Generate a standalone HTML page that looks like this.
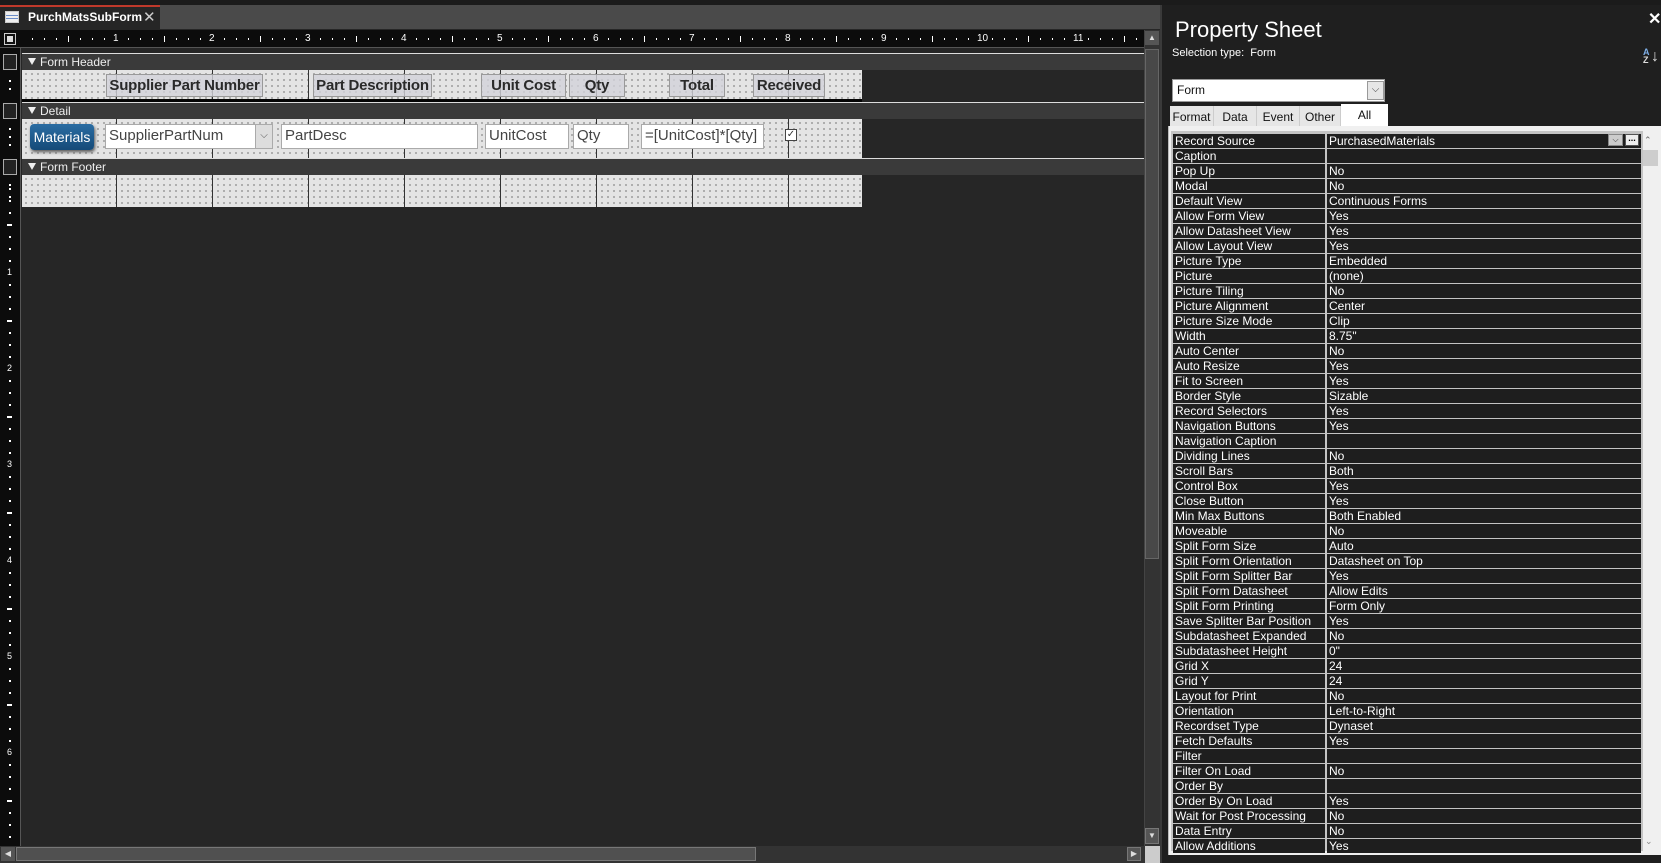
<!DOCTYPE html>
<html><head><meta charset="utf-8">
<style>
*{box-sizing:border-box;margin:0;padding:0}
body{width:1661px;height:863px;background:#262626;position:relative;overflow:hidden;font-family:"Liberation Sans",sans-serif}
.a{position:absolute}
.dots{background-color:#e4e4e4;background-image:radial-gradient(circle,#666 0.6px,transparent 0.9px);background-size:6px 6px;background-position:1px 1px}
.bar{background:#3a3a3a;color:#eee;font-size:12px;line-height:16px;padding-left:18px;border-top:1px solid #ddd}
.bar:before{content:"";position:absolute;left:6px;top:4px;border-left:4px solid transparent;border-right:4px solid transparent;border-top:7px solid #eee}
.vl{position:absolute;top:0;bottom:0;width:1px;background:#333}
.lbl{position:absolute;top:4px;height:23px;border:1px solid #999;background:rgba(210,210,218,.8);color:#2a2a2a;font-weight:bold;font-size:15px;line-height:21px;text-align:center;white-space:nowrap;letter-spacing:-0.2px}
.tb{position:absolute;top:5px;height:25px;background:#fff;border:1px solid #aaa;color:#444;font-size:15px;line-height:22px;padding-left:3px;white-space:nowrap;overflow:hidden}
.row{position:absolute;left:1173px;width:468px;height:14px;font-size:12px;color:#fff;line-height:14px}
.row .n{position:absolute;left:0;width:152px;height:14px;background:#1e1e1e;padding-left:2px}
.row .v{position:absolute;left:154px;width:314px;height:14px;background:#1e1e1e;padding-left:2px}
.tab{position:absolute;top:106px;height:20px;font-size:12px;color:#111;background:#e6e6e6;border-right:1px solid #ccc;line-height:22px;text-align:center}
</style></head><body>
<div class="a" style="left:0;top:0;width:1661px;height:5px;background:#1b1b1b"></div>
<div class="a" style="left:0;top:5px;width:1160px;height:24px;background:#4a4a4a"></div>
<div class="a" style="left:0;top:5px;width:160px;height:25px;background:#262626;border-top:2px solid #c0392b"></div>
<div class="a" style="left:5px;top:11px;width:14px;height:12px;border:1px solid #ccc;background:#eee"><div class="a" style="left:0;top:3px;width:12px;height:1px;background:#6a8cc8"></div><div class="a" style="left:0;top:6px;width:12px;height:1px;background:#6a8cc8"></div></div>
<div class="a" style="left:28px;top:10px;color:#fff;font-size:12px;font-weight:bold">PurchMatsSubForm</div>
<div class="a" style="left:143px;top:8px;color:#ccc;font-size:15px">✕</div>
<div class="a" style="left:0;top:30px;width:1144px;height:18px;background:#0c0c0c;border-bottom:1px solid #555"></div>
<div class="a" style="left:4px;top:33px;width:12px;height:12px;border:1px solid #ccc;background:#111"><div class="a" style="left:2px;top:2px;width:6px;height:6px;background:#ddd"></div></div>
<div id="ruler" class="a" style="left:0;top:30px;width:1144px;height:18px;color:#fff;font-size:10px"></div>
<div class="a" style="left:0;top:48px;width:21px;height:798px;background:#0c0c0c;border-right:1px solid #555"></div>
<div id="vr" class="a" style="left:0;top:0;width:21px;height:846px;color:#fff;font-size:9px"></div>
<div class="a" style="left:3px;top:54px;width:14px;height:16px;border:1px solid #aaa;background:#222"></div>
<div class="a" style="left:3px;top:103px;width:14px;height:16px;border:1px solid #aaa;background:#222"></div>
<div class="a" style="left:3px;top:159px;width:14px;height:16px;border:1px solid #aaa;background:#222"></div>
<div class="a bar" style="left:22px;top:53px;width:1122px;height:17px">Form Header</div>
<div class="a bar" style="left:22px;top:102px;width:1122px;height:17px">Detail</div>
<div class="a bar" style="left:22px;top:158px;width:1122px;height:17px">Form Footer</div>
<div class="a dots" style="left:22px;top:70px;width:840px;height:30px">
 <div class="vl" style="left:94px"></div><div class="vl" style="left:190px"></div><div class="vl" style="left:286px"></div><div class="vl" style="left:382px"></div><div class="vl" style="left:478px"></div><div class="vl" style="left:574px"></div><div class="vl" style="left:670px"></div><div class="vl" style="left:766px"></div>
 <div class="lbl" style="left:84px;width:157px">Supplier Part Number</div>
 <div class="lbl" style="left:291px;width:119px">Part Description</div>
 <div class="lbl" style="left:459px;width:85px">Unit Cost</div>
 <div class="lbl" style="left:547px;width:56px">Qty</div>
 <div class="lbl" style="left:647px;width:56px">Total</div>
 <div class="lbl" style="left:731px;width:72px">Received</div>
</div>
<div class="a" style="left:22px;top:99px;width:840px;height:3px;background:#050505"></div>
<div class="a dots" style="left:22px;top:119px;width:840px;height:39px">
 <div class="vl" style="left:94px"></div><div class="vl" style="left:190px"></div><div class="vl" style="left:286px"></div><div class="vl" style="left:382px"></div><div class="vl" style="left:478px"></div><div class="vl" style="left:574px"></div><div class="vl" style="left:670px"></div><div class="vl" style="left:766px"></div>
 <div class="a" style="left:8px;top:5px;width:64px;height:26px;background:linear-gradient(#2a6da3,#154a78);border-radius:4px;color:#fff;font-size:14px;line-height:26px;text-align:center;box-shadow:1px 2px 3px #555">Materials</div>
 <div class="tb" style="left:83px;width:168px">SupplierPartNum<div class="a" style="right:0;top:0;width:17px;height:23px;background:#ddd;border-left:1px solid #aaa;font-size:10px;text-align:center;color:#555">⌵</div></div>
 <div class="tb" style="left:259px;width:197px">PartDesc</div>
 <div class="tb" style="left:463px;width:84px">UnitCost</div>
 <div class="tb" style="left:551px;width:56px">Qty</div>
 <div class="tb" style="left:619px;width:123px">=[UnitCost]*[Qty]</div>
 <div class="a" style="left:763px;top:10px;width:12px;height:12px;border:1px solid #444;background:#fff;font-size:10px;line-height:10px;text-align:center;color:#333">✓</div>
</div>
<div class="a dots" style="left:22px;top:175px;width:840px;height:32px">
 <div class="vl" style="left:94px"></div><div class="vl" style="left:190px"></div><div class="vl" style="left:286px"></div><div class="vl" style="left:382px"></div><div class="vl" style="left:478px"></div><div class="vl" style="left:574px"></div><div class="vl" style="left:670px"></div><div class="vl" style="left:766px"></div>
</div>
<div class="a" style="left:1144px;top:30px;width:16px;height:816px;background:#333;border-left:1px solid #444"></div>
<div class="a" style="left:1145px;top:31px;width:14px;height:14px;background:#555;color:#ddd;font-size:8px;text-align:center;line-height:14px">▲</div>
<div class="a" style="left:1145px;top:49px;width:14px;height:510px;background:#484848;border:1px solid #666"></div>
<div class="a" style="left:1145px;top:828px;width:14px;height:16px;background:#555;border:1px solid #777;color:#ddd;font-size:8px;text-align:center;line-height:14px">▼</div>
<div class="a" style="left:0;top:846px;width:1160px;height:17px;background:#333"></div>
<div class="a" style="left:1px;top:847px;width:14px;height:14px;background:#555;color:#ddd;font-size:8px;line-height:14px;text-align:center">◀</div>
<div class="a" style="left:16px;top:847px;width:740px;height:14px;background:#505050;border:1px solid #777"></div>
<div class="a" style="left:1127px;top:847px;width:14px;height:14px;background:#555;border:1px solid #777;color:#ddd;font-size:8px;line-height:12px;text-align:center">▶</div>
<div class="a" style="left:1145px;top:846px;width:15px;height:17px;background:#ccc"></div>
<div class="a" style="left:1160px;top:5px;width:501px;height:858px;background:#1f1f1f;border-left:2px solid #3a3a3a"></div>
<div class="a" style="left:1175px;top:17px;color:#fff;font-size:22px">Property Sheet</div>
<div class="a" style="left:1172px;top:47px;color:#fff;font-size:11px">Selection type:&nbsp; Form</div>
<div class="a" style="left:1648px;top:9px;color:#fff;font-size:16px;font-weight:bold">✕</div>
<div class="a" style="left:1643px;top:48px;color:#7fb0e8;font-size:9px;line-height:8px;font-weight:bold">A<br><span style="color:#ddd">Z</span></div>
<div class="a" style="left:1651px;top:48px;color:#ddd;font-size:16px">↓</div>
<div class="a" style="left:1172px;top:79px;width:213px;height:23px;background:#fff;border:1px solid #999;font-size:12px;line-height:20px;padding-left:4px;color:#111">Form</div>
<div class="a" style="left:1367px;top:81px;width:17px;height:19px;background:#e6e6e6;border:1px solid #999;font-size:10px;text-align:center;color:#444;line-height:16px">⌵</div>
<div class="tab" style="left:1170px;width:44px">Format</div>
<div class="tab" style="left:1214px;width:43px">Data</div>
<div class="tab" style="left:1257px;width:43px">Event</div>
<div class="tab" style="left:1300px;width:41px">Other</div>
<div class="a" style="left:1341px;top:104px;width:47px;height:24px;background:#fff;font-size:12px;text-align:center;line-height:22px;color:#111">All</div>
<div class="a" style="left:1168px;top:126px;width:493px;height:729px;background:#f0f0f0;border-left:1px solid #bbb"></div>
<div class="a" style="left:1171px;top:131px;width:472px;height:720px;background:#c4c4c4"></div>
<div class="a" style="left:1643px;top:131px;width:16px;height:720px;background:#f0f0f0"></div>
<div class="a" style="left:1644px;top:135px;color:#666;font-size:9px">⌃</div>
<div class="a" style="left:1643px;top:150px;width:15px;height:16px;background:#cdcdcd"></div>
<div class="a" style="left:1645px;top:836px;color:#888;font-size:9px">⌄</div>
<div id="rows"></div>
<div class="a" style="left:1608px;top:134px;width:15px;height:12px;background:#ccc;border:1px solid #888;font-size:8px;text-align:center;color:#333;line-height:10px">⌵</div>
<div class="a" style="left:1625px;top:134px;width:14px;height:12px;background:#eee;border:1px solid #555;font-size:9px;text-align:center;color:#000;line-height:6px;font-weight:bold">...</div>
<script>
var d=[["Record Source","PurchasedMaterials"],["Caption",""],["Pop Up","No"],["Modal","No"],["Default View","Continuous Forms"],["Allow Form View","Yes"],["Allow Datasheet View","Yes"],["Allow Layout View","Yes"],["Picture Type","Embedded"],["Picture","(none)"],["Picture Tiling","No"],["Picture Alignment","Center"],["Picture Size Mode","Clip"],["Width","8.75\""],["Auto Center","No"],["Auto Resize","Yes"],["Fit to Screen","Yes"],["Border Style","Sizable"],["Record Selectors","Yes"],["Navigation Buttons","Yes"],["Navigation Caption",""],["Dividing Lines","No"],["Scroll Bars","Both"],["Control Box","Yes"],["Close Button","Yes"],["Min Max Buttons","Both Enabled"],["Moveable","No"],["Split Form Size","Auto"],["Split Form Orientation","Datasheet on Top"],["Split Form Splitter Bar","Yes"],["Split Form Datasheet","Allow Edits"],["Split Form Printing","Form Only"],["Save Splitter Bar Position","Yes"],["Subdatasheet Expanded","No"],["Subdatasheet Height","0\""],["Grid X","24"],["Grid Y","24"],["Layout for Print","No"],["Orientation","Left-to-Right"],["Recordset Type","Dynaset"],["Fetch Defaults","Yes"],["Filter",""],["Filter On Load","No"],["Order By",""],["Order By On Load","Yes"],["Wait for Post Processing","No"],["Data Entry","No"],["Allow Additions","Yes"]];
var h="";d.forEach(function(r,i){var t=134+i*15;if(t>840)return;h+='<div class="row" style="top:'+t+'px"><div class="n">'+r[0]+'</div><div class="v">'+r[1]+'</div></div>';});
document.getElementById("rows").innerHTML=h;
var r="";for(var k=1;k<94;k++){var x=20+k*12;if(x>1140)break;if(k%8==0){r+='<div class="a" style="left:'+(x-3)+'px;top:2px;font-size:10px;line-height:14px">'+(k/8)+'</div>';}else if(k%4==0){r+='<div class="a" style="left:'+x+'px;top:6px;width:1px;height:6px;background:#fff"></div>';}else{r+='<div class="a" style="left:'+x+'px;top:8px;width:1px;height:2px;background:#fff"></div>';}}
document.getElementById("ruler").innerHTML=r;
var v="";
[80,88,128,136,144,184,196].forEach(function(y){v+='<div class="a" style="left:9px;top:'+y+'px;width:2px;height:2px;background:#fff"></div>';});
for(var k=1;k<60;k++){var y=176+k*12;if(y>840)break;if(k%8==0){v+='<div class="a" style="left:7px;top:'+(y-5)+'px;font-size:9px">'+(k/8)+'</div>';}else if(k%4==0){v+='<div class="a" style="left:7px;top:'+y+'px;width:5px;height:2px;background:#fff"></div>';}else{v+='<div class="a" style="left:9px;top:'+y+'px;width:2px;height:2px;background:#fff"></div>';}}
document.getElementById("vr").innerHTML=v;
</script>
</body></html>
